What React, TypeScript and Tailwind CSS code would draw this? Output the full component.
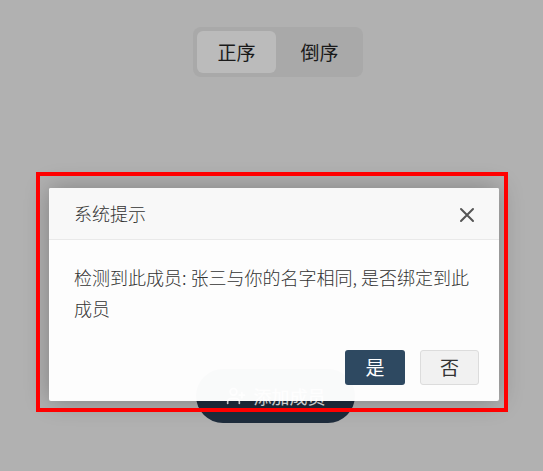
import { UserPlus } from 'lucide-react';

const cjk = { fontFamily: '"Noto Sans CJK SC", "Noto Sans", sans-serif' };

export default function App() {
  return (
    <div className="relative h-[471px] w-[543px] overflow-hidden bg-[#b1b1b1]" style={cjk}>
      {/* sort toggle */}
      <div className="flex justify-center pt-[27px]">
        <div className="ml-[13px] flex h-[50px] w-[170px] gap-1 rounded-lg bg-[#a9a9a9] p-1">
          <button className="flex-1 rounded-md bg-[#bbbbbb] text-[19px] text-[#1a1a1a]">正序</button>
          <button className="flex-1 rounded-md text-[19px] text-[#1a1a1a]">倒序</button>
        </div>
      </div>

      {/* add member pill behind the dialog */}
      <div className="absolute left-[196px] top-[369px] flex h-[54px] w-[159px] items-center justify-center gap-2 rounded-full bg-[#1e2c3c] text-[18px] text-[#e6e6e6]">
        <UserPlus className="h-5 w-5" />
        添加成员
      </div>

      {/* dialog */}
      <div className="absolute left-[49px] top-[188px] w-[450px] overflow-hidden rounded-[2px] bg-white/[0.975] shadow-[0_0_24px_rgba(0,0,0,0.28)]">
        <div className="flex h-[52px] items-center justify-between border-b border-[#e9e9e9] bg-[#f8f8f8] pl-[25px] pr-[24px]">
          <span className="text-[18px] font-light text-[#333]">系统提示</span>
          <svg width="16" height="16" viewBox="0 0 16 16" className="mt-[2px]">
            <path d="M2 2 L14 14 M14 2 L2 14" stroke="#555" strokeWidth="2" strokeLinecap="round" />
          </svg>
        </div>
        <div className="px-[25px] pt-[22px] text-[18px] font-light leading-[31px] text-[#333]">
          检测到此成员: 张三与你的名字相同, 是否绑定到此成员
        </div>
        <div className="flex justify-end gap-[15px] pb-[16px] pr-[20px] pt-[26px]">
          <button className="h-[35px] w-[60px] rounded-[3px] bg-[#2e4961] text-[19px] text-white">是</button>
          <button className="h-[35px] w-[59px] rounded-[3px] border border-[#dcdcdc] bg-[#f1f1f1] text-[19px] text-[#333]">否</button>
        </div>
      </div>

      {/* annotation frame */}
      <div className="pointer-events-none absolute left-[36px] top-[172px] h-[240px] w-[472px] border-[4px] border-[#ff0000]" />
    </div>
  );
}
